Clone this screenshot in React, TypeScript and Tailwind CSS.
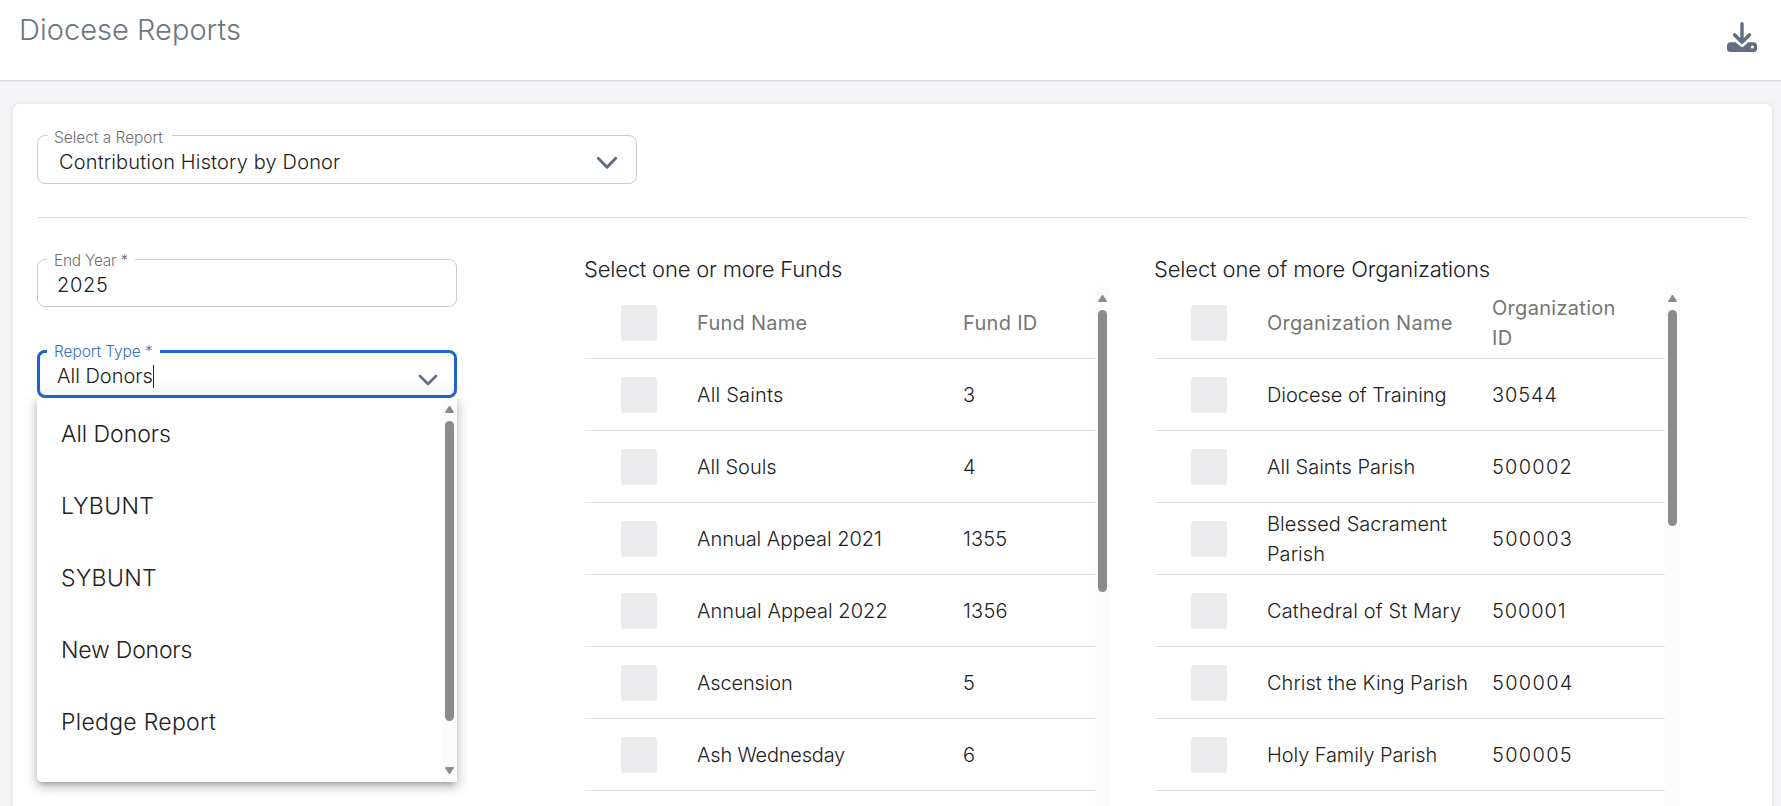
interface Row {
  name: string;
  nameTracking: string;
  id: string;
  idTracking: string;
}

const reportTypes = [
  { label: 'All Donors', tracking: 'tracking-[-0.03px]' },
  { label: 'LYBUNT', tracking: 'tracking-[0.34px]' },
  { label: 'SYBUNT', tracking: 'tracking-[0.37px]' },
  { label: 'New Donors', tracking: 'tracking-[-0.2px]' },
  { label: 'Pledge Report', tracking: 'tracking-[0.3px]' },
];

const funds: Row[] = [
  { name: 'All Saints', nameTracking: 'tracking-[0.2px]', id: '3', idTracking: '' },
  { name: 'All Souls', nameTracking: 'tracking-normal', id: '4', idTracking: '' },
  { name: 'Annual Appeal 2021', nameTracking: 'tracking-[-0.03px]', id: '1355', idTracking: 'tracking-[0.1px]' },
  { name: 'Annual Appeal 2022', nameTracking: 'tracking-[0.05px]', id: '1356', idTracking: 'tracking-[0.25px]' },
  { name: 'Ascension', nameTracking: 'tracking-[-0.15px]', id: '5', idTracking: '' },
  { name: 'Ash Wednesday', nameTracking: 'tracking-[-0.2px]', id: '6', idTracking: '' },
];

const organizations: Row[] = [
  { name: 'Diocese of Training', nameTracking: 'tracking-[-0.04px]', id: '30544', idTracking: 'tracking-[0.85px]' },
  { name: 'All Saints Parish', nameTracking: 'tracking-[0.02px]', id: '500002', idTracking: 'tracking-[1.25px]' },
  { name: 'Blessed Sacrament Parish', nameTracking: 'tracking-[0.06px]', id: '500003', idTracking: 'tracking-[1.3px]' },
  { name: 'Cathedral of St Mary', nameTracking: 'tracking-[0.13px]', id: '500001', idTracking: 'tracking-[0.9px]' },
  { name: 'Christ the King Parish', nameTracking: 'tracking-[0.03px]', id: '500004', idTracking: 'tracking-[1.3px]' },
  { name: 'Holy Family Parish', nameTracking: 'tracking-[-0.09px]', id: '500005', idTracking: 'tracking-[1.3px]' },
];

function DownloadIcon() {
  return (
    <svg className="w-[30px] h-[30px]" viewBox="0 0 30 30" fill="none">
      <path fill="#626d81" d="M3.5 20.2h5.2l4.2 3.9a3.1 3.1 0 004.2 0l4.2-3.9h5.2A3.5 3.5 0 0130 23.7v2.8a3.5 3.5 0 01-3.5 3.5h-23A3.5 3.5 0 010 26.5v-2.8a3.5 3.5 0 013.5-3.5z" />
      <path stroke="white" strokeWidth={6} strokeLinejoin="round" d="M9 14.500l6 5.700 6-5.700" />
      <circle cx="25.4" cy="25.1" r="1.500" fill="white" />
      <path stroke="#626d81" strokeWidth={3.4} strokeLinecap="round" strokeLinejoin="round" d="M15 1.800v18.400M7.500 12.800l7.500 7.400 7.500-7.400" />
    </svg>
  );
}

function ScrollArrow({ down = false }: { down?: boolean }) {
  return (
    <svg className={`w-[9px] h-[7px] shrink-0 ${down ? 'rotate-180' : ''}`} viewBox="0 0 9 7" fill="#8b8b8b">
      <path d="M3.7.5a1 1 0 011.6 0l3.5 5.2c.4.7 0 1.3-.8 1.3H1C.2 7-.2 6.400.2 5.700z" />
    </svg>
  );
}

function Scrollbar({ thumb, end = false }: { thumb: string; end?: boolean }) {
  return (
    <div className="w-[15px] shrink-0 bg-[#fcfcfc] flex flex-col items-center py-2">
      <ScrollArrow />
      <div className={`w-[9px] mt-2 rounded-full bg-[#8b8b8b] shrink-0 ${thumb}`} />
      {end && (
        <div className="mt-auto flex">
          <ScrollArrow down />
        </div>
      )}
    </div>
  );
}

function Table({
  title,
  titleTracking,
  nameHeader,
  nameHeaderTracking,
  idHeader,
  rows,
  columns,
  thumb,
}: {
  title: string;
  titleTracking: string;
  nameHeader: string;
  nameHeaderTracking: string;
  idHeader: string;
  rows: Row[];
  columns: string;
  thumb: string;
}) {
  return (
    <section className="w-[525px] shrink-0">
      <h2 className={`text-[22px] leading-9 -ml-px ${titleTracking}`}>{title}</h2>
      <div className="flex h-[560px] overflow-hidden">
        <div className="w-[510px] shrink-0 text-[20px] leading-[30px]">
          <div className={`grid ${columns} h-[72px] items-center pl-9 border-b border-[#dedede] text-[#757575] font-normal`}>
            <span className="w-9 h-9 rounded-[3px] bg-[#ebebed]" />
            <span className={nameHeaderTracking}>{nameHeader}</span>
            <span className="w-[130px] tracking-[0.3px]">{idHeader}</span>
          </div>
          {rows.map((row) => (
            <div key={row.name} className={`grid ${columns} h-[72px] items-center pl-9 border-b border-[#dedede]`}>
              <span className="w-9 h-9 rounded-[3px] bg-[#ebebed]" />
              <span className={`pr-3 ${row.nameTracking}`}>{row.name}</span>
              <span className={row.idTracking}>{row.id}</span>
            </div>
          ))}
        </div>
        <Scrollbar thumb={thumb} />
      </div>
    </section>
  );
}

function App() {
  return (
    <div className="h-[806px] overflow-hidden flex flex-col bg-[#f4f4f7] font-['Inter',sans-serif] font-light text-[#212121]">
      <header className="h-[81px] shrink-0 bg-white border-b border-[#dadbdf] shadow-[0_1px_0_#e6e7ea] flex items-start justify-between pl-[19px] pr-6">
        <h1 className="mt-2.5 text-[29px] leading-10 tracking-[0.03px] text-[#6e7680]">Diocese Reports</h1>
        <button className="mt-[22px]">
          <DownloadIcon />
        </button>
      </header>

      <main className="mt-[23px] ml-[13px] mr-[9px] h-[760px] shrink-0 rounded-t-md bg-white px-6 pt-[31px] shadow-[0_0_5px_rgba(0,0,0,0.1)]">
        {/* Report picker */}
        <div className="relative w-[600px] h-[49px] rounded-lg border border-[#cbcbcb] flex items-center justify-between pl-[21px] pr-[18px] pt-[5px]">
          <label className="absolute left-2.5 -top-2 w-[124px] pl-1.5 bg-white text-[15.5px] leading-5 tracking-[-0.04px] text-[#6f6f6f] whitespace-nowrap">Select a Report</label>
          <span className="text-[20px] leading-6 tracking-[0.15px]">Contribution History by Donor</span>
          <svg className="w-[22px] h-[14px] mt-px" viewBox="0 0 22 14" fill="none" stroke="#626d81">
            <path strokeLinecap="round" strokeLinejoin="round" strokeWidth={3} d="M2.3 2.300L11 11.200l8.700-8.900" />
          </svg>
        </div>

        <hr className="mt-[33px] border-[#dedede]" />

        <div className="flex items-start mt-[33px]">
          <div className="w-[420px] shrink-0 mt-2">
            {/* End year */}
            <div className="relative h-12 rounded-lg border border-[#cbcbcb] flex items-center pl-[19px] pt-[3px]">
              <label className="absolute left-[9px] -top-[9px] w-[88px] pl-[7px] bg-white text-[15.5px] leading-5 tracking-[-0.25px] text-[#6f6f6f] whitespace-nowrap">End Year *</label>
              <span className="text-[20px] leading-6 tracking-[0.7px]">2025</span>
            </div>

            {/* Report type */}
            <div className="relative mt-[43px] h-12 rounded-lg border-3 border-[#1f63cc] flex items-center justify-between pl-[17px] pr-4 pt-1 bg-linear-to-b from-white from-60% to-[#f7f7f7]">
              <label className="absolute left-[7px] -top-[11px] w-[113px] pl-[7px] bg-white text-[15.5px] leading-5 tracking-[-0.1px] text-[#3570ce] whitespace-nowrap">Report Type *</label>
              <span className="flex items-center text-[20px] leading-6">
                All Donors
                <span className="w-px h-[23px] bg-[#212121]" />
              </span>
              <svg className="w-[20px] h-[13px] mt-[9px]" viewBox="0 0 20 13" fill="none" stroke="#626d81">
                <path strokeLinecap="round" strokeLinejoin="round" strokeWidth={2.6} d="M2 2l8 8 8-8" />
              </svg>
              <div className="absolute z-10 -left-[3px] top-[45px] w-[420px] h-[384px] rounded-bl-[5px] bg-white flex shadow-[0_5px_5px_-3px_rgba(0,0,0,0.2),0_4px_10px_1px_rgba(0,0,0,0.14),0_3px_14px_2px_rgba(0,0,0,0.12)] [clip-path:inset(0_-30px_-30px_-30px)]">
                <ul className="flex-1 overflow-hidden text-[23px] leading-[72px] pl-6">
                  {reportTypes.map(({ label, tracking }) => (
                    <li key={label} className={tracking}>{label}</li>
                  ))}
                </ul>
                <Scrollbar thumb="h-[300px]" end />
              </div>
            </div>
          </div>

          <div className="flex gap-[45px] ml-32">
            <Table
              title="Select one or more Funds"
              titleTracking="tracking-[-0.21px]"
              nameHeader="Fund Name"
              nameHeaderTracking="tracking-[0.25px]"
              idHeader="Fund ID"
              rows={funds}
              columns="grid-cols-[76px_266px_1fr]"
              thumb="h-[282px]"
            />
            <Table
              title="Select one of more Organizations"
              titleTracking="tracking-[-0.15px]"
              nameHeader="Organization Name"
              nameHeaderTracking="tracking-[0.26px]"
              idHeader="Organization ID"
              rows={organizations}
              columns="grid-cols-[76px_225px_1fr]"
              thumb="h-[216px]"
            />
          </div>
        </div>
      </main>
    </div>
  );
}

export default App;
